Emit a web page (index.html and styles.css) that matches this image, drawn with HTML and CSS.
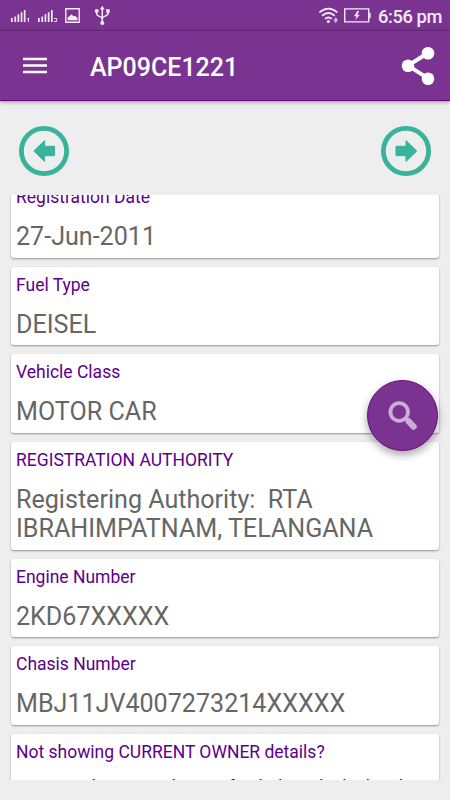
FILE: index.html
```html
<!DOCTYPE html>
<html lang="en">
<head>
<meta charset="utf-8">
<title>Vehicle details</title>
<link rel="stylesheet" href="styles.css">
</head>
<body>
<div class="status">
  <svg class="status-left" width="110" height="30" viewBox="0 0 110 30" fill="#f4ecf6">
    <path d="M11 18h1.7v4H11zM14.4 16.5h1.7V22h-1.7zM17.5 14.3h1.7V22h-1.7zM20.7 12.2h1.7V22h-1.7zM23.8 10h1.7v12h-1.7z"/>
    <path d="M38 18h1.7v4H38zM41.4 16.5h1.7V22h-1.7zM44.6 14.3h1.7V22h-1.7zM47.8 12.2h1.7V22h-1.7zM51 10h1.7v12H51z"/>
    <path d="M27.2 18.6l1-.6h.8v4h-1v-2.8l-.8.3z"/>
    <path d="M54.2 18.5h2.6v1.5l-1.2 1.2" fill="none" stroke="#f4ecf6" stroke-width=".9"/><path d="M54.2 21h2.8v1h-2.8z"/>
    <path d="M65.8 8.8h13.4v13.4H65.8z" fill="none" stroke="#f4ecf6" stroke-width="1.4"/>
    <path d="M67.6 20.3v-2.8l1.8-1.2 2.1-2 2 2 1.6-.6 2.4 2.4v2.2z"/>
    <path d="M102.3 8v15M96.7 11v3c0 2.7 5.6 2 5.6 5M108 11v2.5c0 3-5.7 2.2-5.7 5" fill="none" stroke="#f4ecf6" stroke-width="1.5"/>
    <path d="M102.3 5.7l2.4 3.8h-4.8zM106.2 9.2h3.5v3.5h-3.5z"/><circle cx="96.7" cy="11" r="2"/><circle cx="102.3" cy="23" r="2"/>
  </svg>
  <div class="status-right">
    <svg width="54" height="30" viewBox="318 0 54 30" fill="none" stroke="#f4ecf6">
      <path d="M319.4 12.4q9-7.6 18 0M322.1 15.7q6.3-5.3 12.6 0M325 18.9q3.4-2.8 6.8 0" stroke-width="1.8"/>
      <circle cx="328.4" cy="21.5" r="1.5" fill="#f4ecf6" stroke="none"/>
      <path d="M335.7 17.2l1.8 2.4v1.2l-1.8 2.4-1.8-2.4v-1.2z" fill="#cdb0d4" stroke="none"/>
      <path d="M344.7 8.9h24v13h-24z" stroke-width="1.4"/>
      <path d="M369.5 13h.8v5h-.8z" fill="#f4ecf6" stroke-width=".6"/>
      <path d="M357.3 10.9l-3.3 5.3h2.5l-1.3 4 4.6-5.5h-2.6l2-3.8z" fill="#f4ecf6" stroke="none"/>
    </svg>
    <span class="clock">6:56 pm</span>
  </div>
</div>
<header class="bar">
  <svg width="24" height="18" viewBox="0 0 24 18" fill="#fff"><path d="M0 .8h24v2.5H0zM0 7.3h24v2.5H0zM0 13.8h24v2.5H0z"/></svg>
  <h1 class="title">AP09CE1221</h1>
  <svg class="share" width="34" height="40" viewBox="0 0 34 40" fill="#fff"><path d="M27 7L7 19.6 27 32.4" fill="none" stroke="#fff" stroke-width="4"/><circle cx="27" cy="7.3" r="6.3"/><circle cx="7" cy="19.7" r="6.3"/><circle cx="27" cy="32.7" r="6.3"/></svg>
</header>
<nav class="pager">
  <svg width="52" height="52" viewBox="0 0 52 52"><circle cx="26" cy="26" r="22.6" fill="none" stroke="#39b39b" stroke-width="4.8"/><path d="M15.8 26L26.6 15.6v5.7H36.5v9.4H26.6v5.7z" fill="#39b39b" stroke="#39b39b" stroke-linejoin="round"/></svg>
  <svg width="52" height="52" viewBox="0 0 52 52"><circle cx="26" cy="26" r="22.6" fill="none" stroke="#39b39b" stroke-width="4.8"/><path d="M36.8 26L26 15.6v5.7H16v9.4H26v5.7z" fill="#39b39b" stroke="#39b39b" stroke-linejoin="round"/></svg>
</nav>
<main class="list">
  <section class="card"><h2>Registration Date</h2><p>27-Jun-2011</p></section>
  <section class="card"><h2>Fuel Type</h2><p>DEISEL</p></section>
  <section class="card"><h2>Vehicle Class</h2><p>MOTOR CAR</p></section>
  <section class="card"><h2>REGISTRATION AUTHORITY</h2><p>Registering Authority:&nbsp; RTA<br>IBRAHIMPATNAM, TELANGANA</p></section>
  <section class="card"><h2>Engine Number</h2><p>2KD67XXXXX</p></section>
  <section class="card"><h2>Chasis Number</h2><p>MBJ11JV4007273214XXXXX</p></section>
  <section class="card"><h2>Not showing CURRENT OWNER details?</h2><p class="note">Note: Vaahan is working to fetch the vehicle details</p></section>
</main>
<button class="fab" aria-label="Search">
  <svg width="32" height="32" viewBox="0 0 32 32" fill="none" stroke="#cbaed8"><circle cx="12.2" cy="12" r="8.8" stroke-width="3.8"/><path d="M18 18l3 3" stroke-width="3"/><path d="M21.6 21.4l5 5.2" stroke-width="6.2" stroke-linecap="round"/></svg>
</button>
</body>
</html>
```
FILE: styles.css
```css
* { box-sizing: border-box; margin: 0; padding: 0; }
body { width: 450px; height: 800px; overflow: hidden; background: #eee; font-family: Roboto, sans-serif; display: flex; flex-direction: column; }
svg { display: block; flex: none; }
.status { height: 31px; background: #7a3391; border-bottom: 1px solid #6b2c80; display: flex; justify-content: space-between; flex: none; }
.status-right { display: flex; padding-right: 8px; }
.clock { font-size: 18.3px; font-weight: 500; letter-spacing: -.4px; line-height: 33px; color: #f4ecf6; margin-left: 6px; white-space: nowrap; }
.bar { height: 70px; background: #7a3391; border-bottom: 1px solid #6a0686; box-shadow: 0 1px 4px rgba(0,0,0,.4); display: flex; align-items: center; padding: 1px 15px 0 23px; flex: none; }
.title { font-size: 25px; font-weight: 500; color: #fff; margin-left: 43px; padding-top: 3px; flex: 1; }
.pager { height: 94px; display: flex; justify-content: space-between; padding: 24px 18px 0; flex: none; }
.list { height: 585px; overflow: hidden; padding: 0 11px; flex: none; }
.card { background: #fff; border-radius: 3px; box-shadow: 0 1px 2px rgba(0,0,0,.38); padding: 8px 5px 6px; margin-bottom: 9px; height: 78.5px; }
.card:first-child { margin-top: -15.6px; }
.card:nth-child(4) { height: 108px; }
.card h2 { font-size: 17.5px; font-weight: 400; line-height: 21px; color: #5b0089; white-space: nowrap; }
.card p { font-size: 25.1px; line-height: 29.6px; color: #666; margin-top: 13.6px; white-space: nowrap; }
.card .note { font-size: 17.5px; line-height: 21px; color: #222; margin-top: 14.4px; }
.fab { position: absolute; left: 367px; top: 380px; width: 71px; height: 71px; border: 1px solid #6a0686; border-radius: 50%; background: #7a3391; box-shadow: 0 4px 8px rgba(0,0,0,.35); display: flex; align-items: center; justify-content: center; }
```
